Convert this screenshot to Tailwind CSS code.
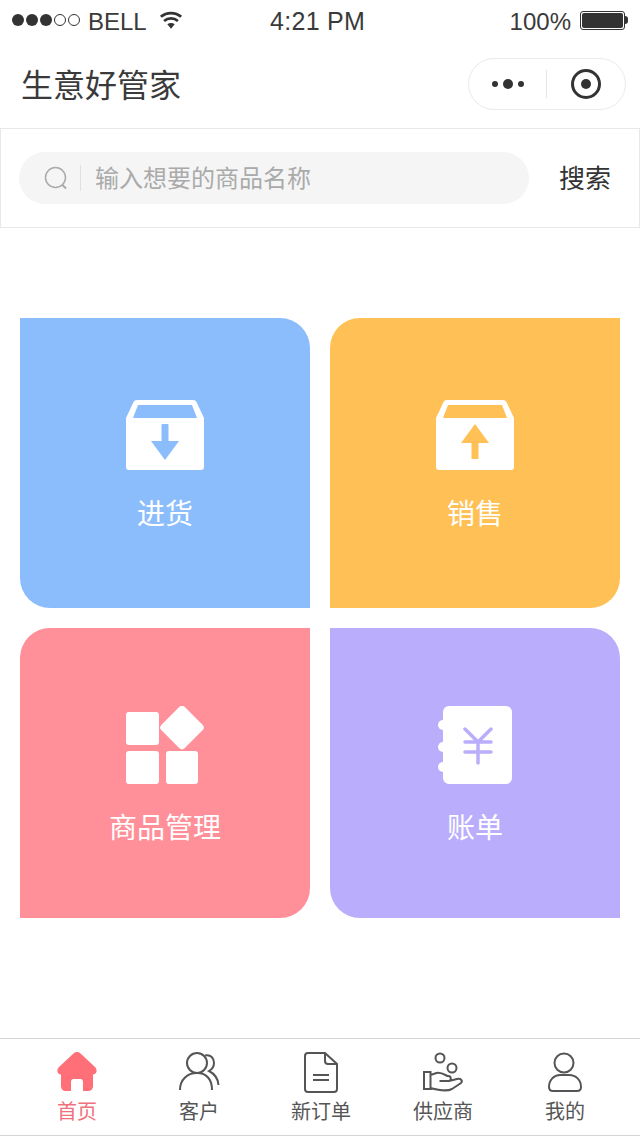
<!DOCTYPE html>
<html lang="zh">
<head>
    <meta charset="UTF-8">
    <title>生意好管家</title>
    <script src="https://cdn.jsdelivr.net/npm/@tailwindcss/browser@4"></script>
</head>
<body class="bg-white font-['Liberation_Sans','Noto_Sans_CJK_SC',sans-serif] text-[#333]">
<div class="w-[640px] h-[1136px] flex flex-col overflow-hidden">
    <!-- Status bar -->
    <div class="h-[40px] relative flex items-center pl-[12px] pr-[12px] text-[24px] text-[#3a3a3a]">
        <div class="flex gap-[2px] items-center">
            <span class="w-[12px] h-[12px] rounded-full bg-[#333]"></span>
            <span class="w-[12px] h-[12px] rounded-full bg-[#333]"></span>
            <span class="w-[12px] h-[12px] rounded-full bg-[#333]"></span>
            <span class="w-[12px] h-[12px] rounded-full border border-[#333]"></span>
            <span class="w-[12px] h-[12px] rounded-full border border-[#333]"></span>
        </div>
        <span class="ml-[8px] mt-[4px]">BELL</span>
        <svg class="ml-[12px] mt-[1px]" width="24" height="19" viewBox="0 0 26 20">
            <path d="M13 19l-4-5c2.300-1.800 5.700-1.800 8 0z" fill="#333"/>
            <path d="M5.500 10.500c4.300-3.800 10.700-3.800 15 0M2 6c6.300-5.300 15.700-5.300 22 0" fill="none" stroke="#333" stroke-width="3"/>
        </svg>
        <span class="absolute left-[270px] top-[1px] leading-[40px] text-[25px] tracking-[0.3px]">4:21 PM</span>
        <span class="ml-auto mt-[4px]">100%</span>
        <div class="ml-[9px] flex items-center">
            <div class="w-[45px] h-[19px] rounded-[3px] border border-[#333] p-[1px]"><div class="w-full h-full rounded-[2px] bg-[#333]"></div></div>
            <div class="w-[3px] h-[8px] rounded-r-full bg-[#333]"></div>
        </div>
    </div>
    <!-- Nav bar -->
    <div class="h-[88px] flex items-center justify-between pl-[21px] pr-[14px]">
        <h1 class="mt-[4px] text-[32px] leading-[44px] font-normal text-[#3a3a3a]">生意好管家</h1>
        <div class="w-[158px] h-[52px] rounded-full border border-[#eaeaea] flex items-center">
            <div class="w-[77px] flex items-center justify-center gap-[5px]">
                <span class="w-[6px] h-[6px] rounded-full bg-[#333]"></span>
                <span class="w-[10px] h-[10px] rounded-full bg-[#333]"></span>
                <span class="w-[6px] h-[6px] rounded-full bg-[#333]"></span>
            </div>
            <div class="w-px h-[28px] bg-[#e5e5e5]"></div>
            <div class="flex-1 flex items-center justify-center">
                <div class="w-[30px] h-[30px] rounded-full border-[3px] border-[#333] flex items-center justify-center">
                    <span class="w-[10px] h-[10px] rounded-full bg-[#333]"></span>
                </div>
            </div>
        </div>
    </div>
    <!-- Search -->
    <div class="h-[100px] border border-[#e8e8e8] flex items-center pl-[18px]">
        <div class="w-[510px] h-[52px] rounded-full bg-[#f5f5f5] flex items-center pl-[25px]">
            <svg width="24" height="24" viewBox="0 0 24 24" fill="none" stroke="#aaa" stroke-width="1.500">
                <circle cx="11.500" cy="11.500" r="10"/>
                <path d="M18.500 19l3.500 3.500" stroke-width="2"/>
            </svg>
            <div class="w-px h-[26px] bg-[#e0e0e0] ml-[12px]"></div>
            <span class="ml-[14px] mt-[2px] text-[24px] text-[#aaa]">输入想要的商品名称</span>
        </div>
        <span class="ml-[30px] mt-[2px] text-[26px] text-[#333]">搜索</span>
    </div>
    <!-- Tiles -->
    <div class="mt-[90px] px-[20px] grid grid-cols-2 gap-[20px] text-white">
        <div class="h-[290px] bg-[#8bbdfd] rounded-tr-[30px] rounded-bl-[30px] flex flex-col items-center pt-[82px]">
            <svg width="78" height="70" viewBox="0 0 78 70">
                <path d="M11 0h56a4 4 0 0 1 3.600 2.200L78 18v49a3 3 0 0 1-3 3H3a3 3 0 0 1-3-3V18L7.400 2.200A4 4 0 0 1 11 0z" fill="#fff"/>
                <path d="M12 5h54l5 13H7z" fill="#8bbdfd"/>
                <path d="M35.500 25a1 1 0 0 1 1-1h5a1 1 0 0 1 1 1v16H53L39 60 25 41h10.500z" fill="#8bbdfd"/>
            </svg>
            <span class="mt-[27px] text-[28px] leading-[36px]">进货</span>
        </div>
        <div class="h-[290px] bg-[#ffc156] rounded-tl-[30px] rounded-br-[30px] flex flex-col items-center pt-[82px]">
            <svg width="78" height="70" viewBox="0 0 78 70">
                <path d="M11 0h56a4 4 0 0 1 3.600 2.200L78 18v49a3 3 0 0 1-3 3H3a3 3 0 0 1-3-3V18L7.400 2.200A4 4 0 0 1 11 0z" fill="#fff"/>
                <path d="M12 5h54l5 13H7z" fill="#ffc156"/>
                <path d="M39 24l14 19H42.500v16h-7V43H25z" fill="#ffc156"/>
            </svg>
            <span class="mt-[27px] text-[28px] leading-[36px]">销售</span>
        </div>
        <div class="h-[290px] bg-[#ff8f98] rounded-tl-[30px] rounded-br-[30px] flex flex-col items-center pt-[78px]">
            <svg width="80" height="80" viewBox="0 0 80 80" fill="#fff">
                <rect x="1" y="6" width="33" height="33" rx="3"/>
                <rect x="1" y="45" width="33" height="33" rx="3"/>
                <rect x="41" y="45" width="32" height="33" rx="3"/>
                <rect x="40.500" y="5" width="33" height="33" rx="4" transform="rotate(45 57 21.500)"/>
            </svg>
            <span class="mt-[25px] text-[28px] leading-[36px]">商品管理</span>
        </div>
        <div class="h-[290px] bg-[#baaefc] rounded-tr-[30px] rounded-bl-[30px] flex flex-col items-center pt-[78px]">
            <svg width="76" height="80" viewBox="0 0 76 80">
                <rect x="6" y="0" width="69" height="78" rx="6" fill="#fff"/>
                <circle cx="6" cy="19" r="5" fill="#fff"/>
                <circle cx="6" cy="41" r="5" fill="#fff"/>
                <circle cx="6" cy="61" r="5" fill="#fff"/>
                <path d="M28 23l13 13 13-13M28 36h26M28 46h26M41 36v21" fill="none" stroke="#baaefc" stroke-width="3.500" stroke-linecap="round"/>
            </svg>
            <span class="mt-[25px] text-[28px] leading-[36px]">账单</span>
        </div>
    </div>
    <!-- Tab bar -->
    <div class="mt-auto h-[98px] border-t border-b border-[#d4d4d4] px-[16px] grid grid-cols-[repeat(5,122px)] text-[20px] text-[#555]">
        <div class="flex flex-col items-center pt-[12px]">
            <svg width="42" height="42" viewBox="0 0 42 42">
                <path d="M21 1c1.500 0 2.500.5 3.500 1.500L39 16c3 3 1.500 7.500-2 7.500V35c0 3-2 5-5 5h-5V31c0-2-1-3-2.500-3h-7C16 28 15 29 15 31v9h-5c-3 0-5-2-5-5V23.500c-3.500 0-5-4.500-2-7.500L17.500 2.500C18.500 1.500 19.500 1 21 1z" fill="#ff6f78"/>
            </svg>
            <span class="mt-[5px] leading-[28px] text-[#f0717b]">首页</span>
        </div>
        <div class="flex flex-col items-center pt-[12px]">
            <svg width="42" height="42" viewBox="0 0 42 42" fill="none" stroke="#555" stroke-width="2">
                <circle cx="19" cy="12" r="10"/>
                <path d="M2 39c0-10 7-17 17-17s15 7 15 17M27 4.500c6-1.500 9 3 9 7.500 0 3-1.500 6-5 8 5 2.500 9 7 9.500 14"/>
            </svg>
            <span class="mt-[5px] leading-[28px]">客户</span>
        </div>
        <div class="flex flex-col items-center pt-[12px]">
            <svg width="36" height="42" viewBox="0 0 36 42" fill="none" stroke="#555" stroke-width="2">
                <path d="M22 2H5a3 3 0 0 0-3 3v33a3 3 0 0 0 3 3h26a3 3 0 0 0 3-3V13z"/>
                <path d="M22 2v8a3 3 0 0 0 3 3h9M10 24h16M10 29h16"/>
            </svg>
            <span class="mt-[5px] leading-[28px]">新订单</span>
        </div>
        <div class="flex flex-col items-center pt-[12px]">
            <svg width="42" height="42" viewBox="0 0 42 42" fill="none" stroke="#555" stroke-width="2">
                <circle cx="18" cy="7" r="4.500"/>
                <circle cx="30" cy="17" r="4.500"/>
                <path d="M2 21h6.500v17H2zM8.500 24l6-2c4-1 7 1 11 3h1c3 0 3 5 0 5h-9M27 30l8-2c4-1 6 2 4 4l-9 6c-6 3-14 1-21.500-1"/>
            </svg>
            <span class="mt-[5px] leading-[28px]">供应商</span>
        </div>
        <div class="flex flex-col items-center pt-[12px]">
            <svg width="36" height="42" viewBox="0 0 36 42" fill="none" stroke="#555" stroke-width="2">
                <circle cx="17" cy="12" r="9.500"/>
                <path d="M2 36c0-7 5-12 11-12h9c7 0 12 5 12 12 0 3-1 4-4 4H6c-3 0-4-1-4-4z"/>
            </svg>
            <span class="mt-[5px] leading-[28px]">我的</span>
        </div>
    </div>
</div>
</body>
</html>
